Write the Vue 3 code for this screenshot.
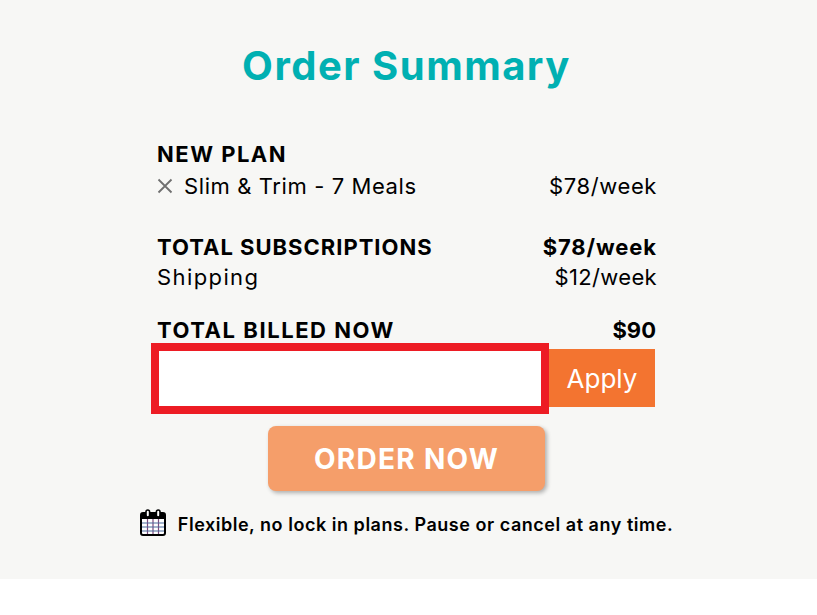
<script setup>
const lines = [
  { label: 'TOTAL SUBSCRIPTIONS', price: '$78/week', bold: true },
  { label: 'Shipping', price: '$12/week', bold: false },
]
</script>

<template>
  <div class="summary">
    <h1 class="title">Order Summary</h1>
    <div class="content">
      <div class="plan-head">NEW PLAN</div>
      <div class="row plan-row">
        <span class="plan-name">
          <svg class="remove" width="16" height="16" viewBox="0 0 16 16">
            <path d="M1.5 1.5L14.5 14.5M14.5 1.5L1.5 14.5" stroke="#6f6f6f" stroke-width="1.8" fill="none" />
          </svg>
          Slim &amp; Trim - 7 Meals
        </span>
        <span class="price">$78/week</span>
      </div>
      <div class="totals">
        <div v-for="line in lines" :key="line.label" class="row" :class="{ strong: line.bold, light: !line.bold }">
          <span class="label">{{ line.label }}</span>
          <span class="price">{{ line.price }}</span>
        </div>
      </div>
      <div class="row strong billed">
        <span class="label wide">TOTAL BILLED NOW</span>
        <span class="plain">$90</span>
      </div>
      <div class="coupon">
        <input class="coupon-input" type="text" />
        <button class="apply">Apply</button>
      </div>
    </div>
    <button class="order">ORDER NOW</button>
    <div class="note">
      <svg class="calendar" width="26" height="28" viewBox="0 0 26 28">
        <rect x="1" y="4" width="24" height="22" rx="2" fill="#fff" stroke="#000" stroke-width="2" />
        <rect x="1" y="4" width="24" height="6" fill="#000" />
        <path d="M7.5 10V25M13 10V25M18.5 10V25" stroke="#7d4a7c" stroke-width="1.2" />
        <path d="M2 14H24M2 18H24M2 22H24" stroke="#4a6a9c" stroke-width="1.2" />
        <rect x="6" y="1" width="3.6" height="7" rx="1.8" fill="#fff" stroke="#000" stroke-width="1.6" />
        <rect x="16.4" y="1" width="3.6" height="7" rx="1.8" fill="#fff" stroke="#000" stroke-width="1.6" />
      </svg>
      <span>Flexible, no lock in plans. Pause or cancel at any time.</span>
    </div>
  </div>
</template>

<style>
html, body {
  background: #fff;
}
</style>

<style scoped>
.summary {
  height: 579px;
  box-sizing: border-box;
  background: #f7f7f5;
  font-family: Inter, "Open Sans", "Liberation Sans", sans-serif;
  color: #000;
  padding-top: 42px;
  padding-right: 4px;
  display: flex;
  flex-direction: column;
  align-items: center;
}

.title {
  margin: 0;
  font-size: 40px;
  line-height: 48px;
  font-weight: 700;
  letter-spacing: 1.5px;
  color: #00b0b2;
}

.content {
  width: 499px;
  margin-top: 49px;
  font-size: 22px;
  letter-spacing: 0.6px;
}

.row {
  display: flex;
  justify-content: space-between;
  line-height: 30px;
}

.price {
  margin-right: -1px;
}

.plan-head {
  font-size: 22px;
  font-weight: 700;
  line-height: 30px;
  letter-spacing: 1.5px;
}

.plan-row {
  margin-top: 2px;
}

.plan-name {
  display: flex;
  align-items: center;
}

.remove {
  margin-right: 11px;
}

.totals {
  margin-top: 31px;
}

.strong {
  font-weight: 700;
  letter-spacing: 0.9px;
}

.strong .label {
  letter-spacing: 1px;
}

.strong .wide {
  letter-spacing: 1.55px;
}

.strong .plain {
  letter-spacing: 0;
}

.light .label {
  letter-spacing: 1.4px;
}

.light .price {
  letter-spacing: 0.35px;
}

.billed {
  margin-top: 23px;
}

.coupon {
  display: flex;
  align-items: flex-start;
  margin-left: -6px;
  margin-top: -2px;
}

.coupon-input {
  width: 398px;
  height: 71px;
  box-sizing: border-box;
  border: 8px solid #ed1c24;
  background: #fff;
  outline: none;
  padding: 0;
}

.apply {
  width: 106px;
  height: 58px;
  margin-top: 6px;
  border: none;
  background: #f37430;
  color: #fff;
  font-family: inherit;
  font-size: 26px;
  padding: 0;
}

.order {
  width: 277px;
  height: 65px;
  margin-top: 12px;
  border: none;
  border-radius: 8px;
  background: #f59e6a;
  color: #fff;
  font-family: inherit;
  font-size: 28px;
  font-weight: 700;
  letter-spacing: 1.3px;
  box-shadow: 2px 2px 4px rgba(0, 0, 0, 0.3);
}

.note {
  display: flex;
  align-items: center;
  margin-top: 20px;
  font-size: 18px;
  font-weight: 600;
  line-height: 28px;
  letter-spacing: 0.53px;
}

.calendar {
  margin-right: 12px;
  margin-top: -4px;
}
</style>
